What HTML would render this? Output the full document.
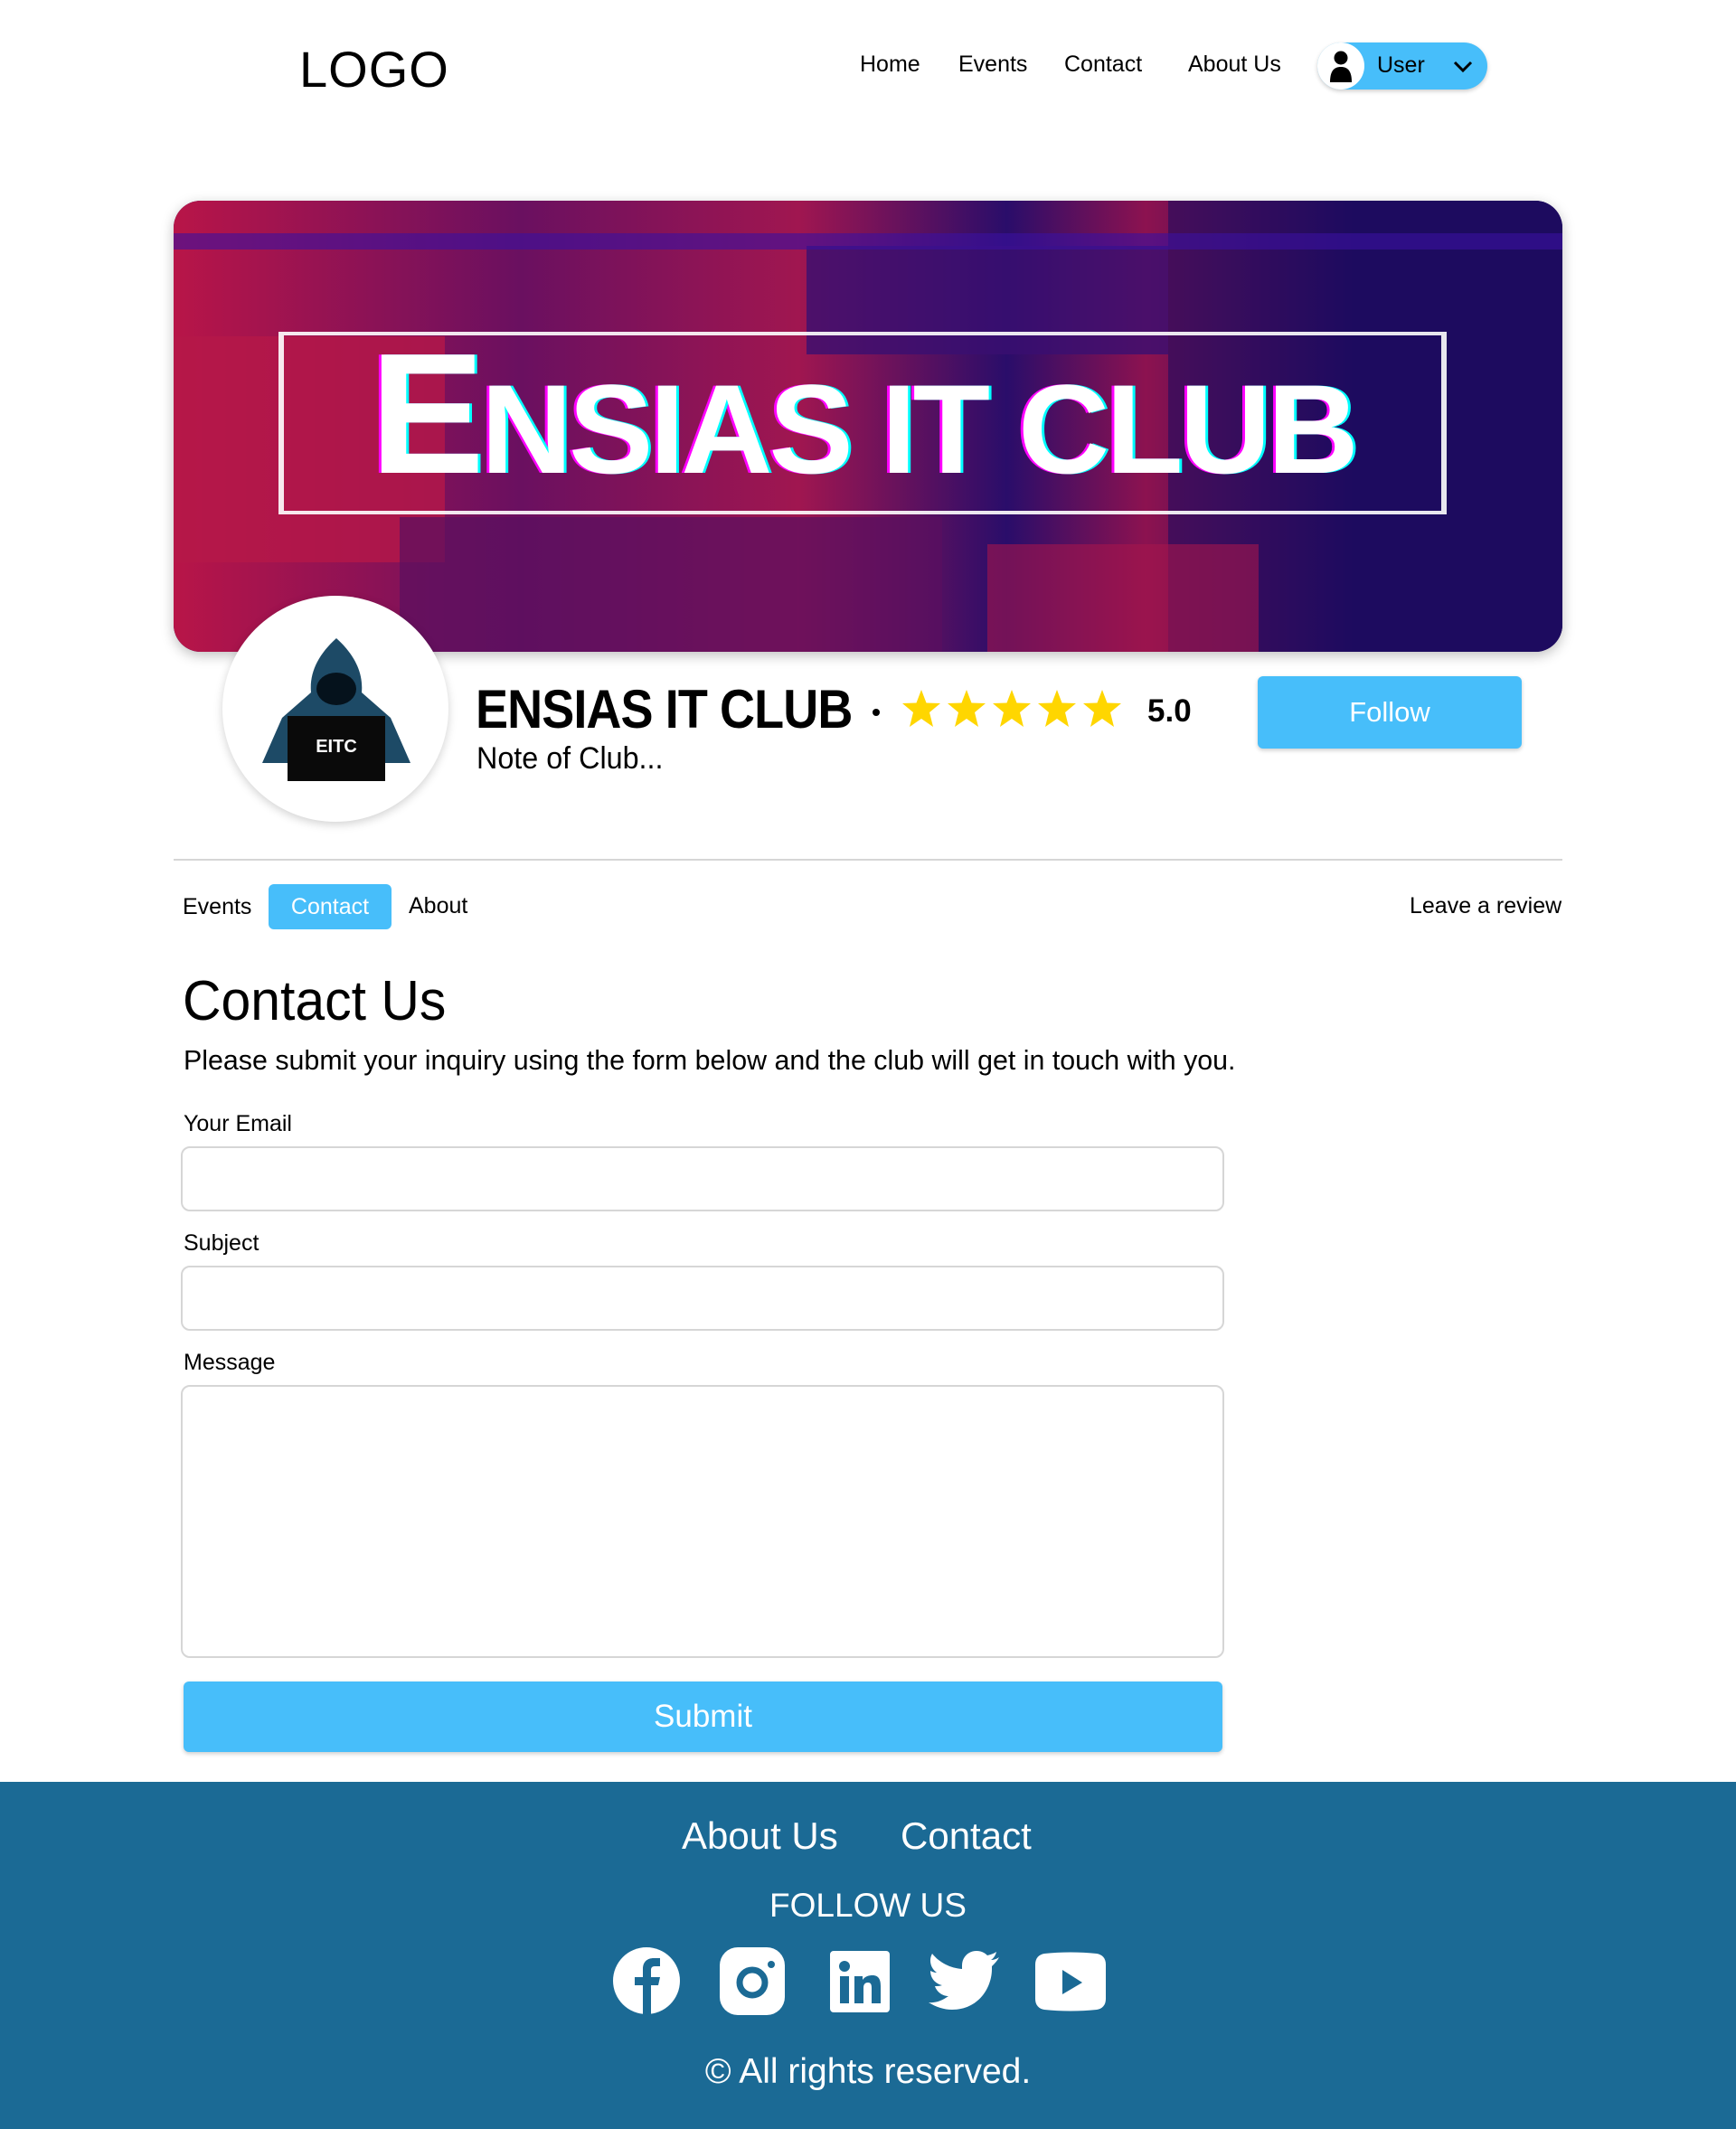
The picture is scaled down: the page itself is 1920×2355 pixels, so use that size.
<!DOCTYPE html>
<html><head><meta charset="utf-8"><style>
*{box-sizing:border-box;margin:0;padding:0}
body{width:1920px;height:2355px;background:#fff;font-family:"Liberation Sans",sans-serif;color:#000;position:relative;overflow:hidden}
.a{position:absolute;white-space:nowrap}
.nav{font-size:25px;top:57px}
.inp{position:absolute;left:200px;width:1154px;border:2px solid #d6d6d6;border-radius:10px;background:#fff}
.lbl{font-size:25px;left:203px}
.banner{position:absolute;left:192px;top:222px;width:1536px;height:499px;border-radius:30px;overflow:hidden;background:#1c0b5e;box-shadow:0 4px 14px rgba(0,0,0,.25)}
.banner div{position:absolute}
</style></head><body>
<div class="a" style="left:331px;top:44px;font-size:56px;letter-spacing:1px">LOGO</div>
<div class="a nav" style="left:951px">Home</div>
<div class="a nav" style="left:1060px">Events</div>
<div class="a nav" style="left:1177px">Contact</div>
<div class="a nav" style="left:1314px">About Us</div>
<div class="a" style="left:1457px;top:47px;width:188px;height:52px;border-radius:26px;background:#47befa;box-shadow:0 2px 5px rgba(0,0,0,.2)">
 <div class="a" style="left:0;top:0;width:52px;height:52px;border-radius:50%;background:#fff"></div>
 <svg class="a" style="left:12px;top:8px" width="28" height="36" viewBox="0 0 28 36"><circle cx="14" cy="9" r="7.5"/><path d="M2 36 C2 24 6 19 14 19 C22 19 26 24 26 36Z"/></svg>
 <div class="a" style="left:66px;top:11px;font-size:25px">User</div>
 <svg class="a" style="left:150px;top:20px" width="22" height="14" viewBox="0 0 22 14"><path d="M2 2 L11 11 L20 2" fill="none" stroke="#000" stroke-width="3"/></svg>
</div>

<div class="banner">
 <div style="left:0;top:0;width:1536px;height:499px;background:linear-gradient(90deg,#b81548 0%,#6a1060 25%,#a01650 45%,#2a0d6a 60%,#8c1250 70%,#1c0b5e 85%)"></div>
 <div style="left:0;top:150px;width:300px;height:250px;background:#b51848;opacity:.8"></div>
 <div style="left:700px;top:50px;width:400px;height:120px;background:#3a0f70;opacity:.8"></div>
 <div style="left:1100px;top:0;width:436px;height:499px;background:#1e0c60;opacity:.6"></div>
 <div style="left:250px;top:350px;width:600px;height:149px;background:#5a1060;opacity:.7"></div>
 <div style="left:900px;top:380px;width:300px;height:119px;background:#a5164c;opacity:.6"></div>
 <div style="left:0;top:36px;width:1536px;height:18px;background:#3a10a0;opacity:.6"></div>
 <div style="left:116px;top:145px;width:1292px;height:202px;border:4px solid #fff;border-width:4px 6px;opacity:.9"></div>
 <div style="left:116px;top:135px;width:1292px;height:202px;display:flex;align-items:center;justify-content:center;white-space:nowrap;font-weight:bold;color:#fff;text-shadow:3px 0 #0ff,-3px 0 #f0f;letter-spacing:-4px"><span style="display:inline-block;transform:scaleX(1.0);font-size:190px;line-height:1">E<span style="font-size:140px">NSIAS IT CLUB</span></span></div>
</div>

<div class="a" style="left:246px;top:659px;width:250px;height:250px;border-radius:50%;background:#fff;box-shadow:0 3px 10px rgba(0,0,0,.18)"></div>
<svg class="a" style="left:282px;top:704px" width="180" height="160" viewBox="0 0 180 160">
 <path d="M90 2 C70 20 60 40 62 62 L30 90 L8 140 L172 140 L150 90 L118 62 C120 40 110 20 90 2Z" fill="#1d4a66"/>
 <ellipse cx="90" cy="58" rx="22" ry="18" fill="#05121c"/>
 <rect x="36" y="88" width="108" height="72" fill="#0a0a0a"/>
 <text x="90" y="128" fill="#fff" font-size="20" font-family="Liberation Sans" text-anchor="middle" font-weight="bold">EITC</text>
</svg>

<div class="a" style="left:526px;top:750px;font-size:60px;font-weight:bold;letter-spacing:-1px;transform:scaleX(.9);transform-origin:left">ENSIAS IT CLUB</div>
<div class="a" style="left:965px;top:784px;width:8px;height:8px;border-radius:50%;background:#000"></div>
<svg class="a" style="left:997px;top:762px" width="246" height="44" viewBox="0 0 246 44">
 <g fill="#ffd600"><path id="s" d="M22 1 L27.5 15.5 L43 16 L31 26 L35 42 L22 33 L9 42 L13 26 L1 16 L16.5 15.5Z"/>
 <use href="#s" x="50"/><use href="#s" x="100"/><use href="#s" x="150"/><use href="#s" x="200"/></g></svg>
<div class="a" style="left:1269px;top:767px;font-size:35px;font-weight:bold">5.0</div>
<div class="a" style="left:1391px;top:748px;width:292px;height:80px;background:#47befa;border-radius:6px;box-shadow:0 2px 5px rgba(0,0,0,.2);color:#fff;font-size:31px;text-align:center;line-height:80px">Follow</div>
<div class="a" style="left:527px;top:820px;font-size:34px;transform:scaleX(.95);transform-origin:left">Note of Club...</div>

<div class="a" style="left:192px;top:950px;width:1536px;height:2px;background:#d6d6d6"></div>
<div class="a" style="left:202px;top:989px;font-size:25px">Events</div>
<div class="a" style="left:297px;top:978px;width:136px;height:50px;border-radius:6px;background:#47befa;color:#fff;font-size:25px;text-align:center;line-height:50px">Contact</div>
<div class="a" style="left:452px;top:988px;font-size:25px">About</div>
<div class="a" style="left:1559px;top:988px;font-size:25px">Leave a review</div>

<div class="a" style="left:202px;top:1072px;font-size:62px;transform:scaleX(.95);transform-origin:left">Contact Us</div>
<div class="a" style="left:203px;top:1155px;font-size:31px;transform:scaleX(.98);transform-origin:left">Please submit your inquiry using the form below and the club will get in touch with you.</div>

<div class="a lbl" style="top:1229px">Your Email</div>
<div class="inp" style="top:1268px;height:72px"></div>
<div class="a lbl" style="top:1361px">Subject</div>
<div class="inp" style="top:1400px;height:72px"></div>
<div class="a lbl" style="top:1493px">Message</div>
<div class="inp" style="top:1532px;height:302px"></div>
<div class="a" style="left:203px;top:1860px;width:1149px;height:78px;background:#47befa;border-radius:6px;box-shadow:0 2px 5px rgba(0,0,0,.2);color:#fff;font-size:35px;text-align:center;line-height:78px">Submit</div>

<div class="a" style="left:0;top:1971px;width:1920px;height:384px;background:#1b6a95;color:#fff">
 <div class="a" style="left:754px;top:36px;font-size:42px">About Us</div>
 <div class="a" style="left:996px;top:36px;font-size:42px">Contact</div>
 <div class="a" style="left:0;width:1920px;text-align:center;top:116px;font-size:37px">FOLLOW US</div>
 <svg class="a" style="left:678px;top:183px" width="80" height="76" viewBox="0 0 80 76"><ellipse cx="37" cy="37" rx="37" ry="37" fill="#fff"/><path d="M33 76 V42 H24 V33 H33 V24 C33 16 38 12 45 12 H52 V21 H46 C43 21 42 23 42 25 V33 H52 L50 42 H42 V76Z" fill="#1b6a95"/></svg>
 <svg class="a" style="left:796px;top:183px" width="74" height="75" viewBox="0 0 74 75"><rect x="0" y="0" width="72" height="75" rx="20" fill="#fff"/><circle cx="36" cy="39" r="14" fill="none" stroke="#1b6a95" stroke-width="7"/><circle cx="57" cy="19" r="4" fill="#1b6a95"/></svg>
 <svg class="a" style="left:918px;top:187px" width="66" height="68" viewBox="0 0 66 68"><rect width="66" height="68" rx="4" fill="#fff"/><rect x="11" y="28" width="10" height="30" fill="#1b6a95"/><circle cx="16" cy="17" r="6" fill="#1b6a95"/><path d="M27 28 H36 V32 C39 28 43 27 47 27 C54 27 56 32 56 39 V58 H46 V41 C46 37 45 35 42 35 C38 35 37 38 37 41 V58 H27Z" fill="#1b6a95"/></svg>
 <svg class="a" style="left:1027px;top:186px" width="78" height="70" viewBox="0 0 78 70"><path d="M78 8 C75 10 72 11 69 11 C72 9 74 6 75 2 C72 4 69 5 65 6 C62 3 58 1 53 1 C44 1 37 8 37 17 L37 21 C24 20 12 14 4 4 C0 11 2 20 9 25 C6 25 4 24 2 23 C2 31 7 37 15 39 C12 40 9 40 7 40 C9 46 15 51 22 51 C15 56 7 59 0 58 C8 63 17 66 26 66 C55 66 70 42 70 21 L70 18 C73 15 76 12 78 8Z" fill="#fff"/></svg>
 <svg class="a" style="left:1145px;top:188px" width="78" height="66" viewBox="0 0 78 66"><path d="M10 2 C28 0 50 0 68 2 C74 3 78 7 78 14 V52 C78 59 74 63 68 64 C50 66 28 66 10 64 C4 63 0 59 0 52 V14 C0 7 4 3 10 2Z" fill="#fff"/><path d="M30 20 L52 34 L30 47Z" fill="#1b6a95"/></svg>
 <div class="a" style="left:0;width:1920px;text-align:center;top:299px;font-size:39px">© All rights reserved.</div>
</div>
</body></html>
